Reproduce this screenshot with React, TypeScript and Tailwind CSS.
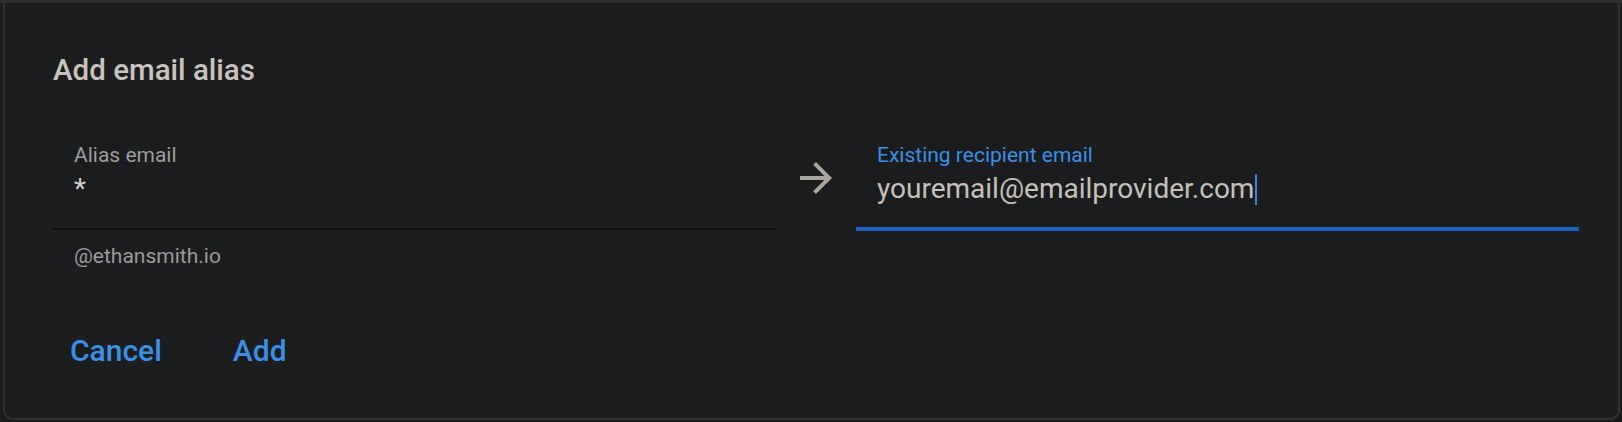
import React from 'react';

function ArrowIcon() {
  return (
    <svg width="48" height="48" viewBox="0 0 24 24" className="shrink-0 mt-[47px]" fill="#aaa59e">
      <path d="M12 4l-1.41 1.41L16.17 11H4v2h12.17l-5.58 5.59L12 20l8-8z" />
    </svg>
  );
}

export default function App() {
  return (
    <div className="w-[1622px] h-[422px] bg-[#1b1c1e] border-t-[3px] border-[#2d2f31] overflow-hidden font-['Roboto',sans-serif]">
      <div className="ml-[3px] mr-[2px] h-[417px] border-l-2 border-r-2 border-b-2 border-[#2d2f31] rounded-b-[10px] bg-[#1c1d1f] pt-[50px] pl-[48px]">
        <h2 className="text-[29.5px] leading-[34px] font-medium text-[#c8c3bc]">Add email alias</h2>

        <div className="flex items-start gap-4 mt-[20px]">
          {/* alias field */}
          <div className="flex flex-col w-[723px] shrink-0">
            <div className="h-[123px] bg-[#1b1c1e] border-b-2 border-[#0f1011] pl-[21px] pt-[36px]">
              <div className="text-[21px] leading-[24px] text-[#9c9c9c]">Alias email</div>
              <div className="mt-[6px] text-[28px] leading-[32px] text-[#d2cec8]">*</div>
            </div>
            <div className="mt-[14px] pl-[21px] text-[21px] leading-[24px] text-[#9a9a9a]">@ethansmith.io</div>
          </div>

          <ArrowIcon />

          {/* recipient field */}
          <div className="w-[723px] shrink-0 h-[124px] bg-[#1b1c1e] border-b-4 border-[#1a5fc2] pl-[21px] pt-[36px]">
            <div className="text-[21px] leading-[24px] text-[#3b8fe6]">Existing recipient email</div>
            <div className="mt-[6px] flex items-center text-[28px] leading-[32px] text-[#c5c0b9]">
              <span>youremail@emailprovider.com</span>
              <span className="ml-[1px] w-[2px] h-[31px] bg-[#3b82dc]" />
            </div>
          </div>
        </div>

        <div className="flex gap-[37px] mt-[58px]">
          <button className="px-[17px] py-2 text-[30px] leading-[34px] font-medium text-[#3b8fe6]">Cancel</button>
          <button className="px-[17px] py-2 text-[30px] leading-[34px] font-medium text-[#3b8fe6]">Add</button>
        </div>
      </div>
    </div>
  );
}
